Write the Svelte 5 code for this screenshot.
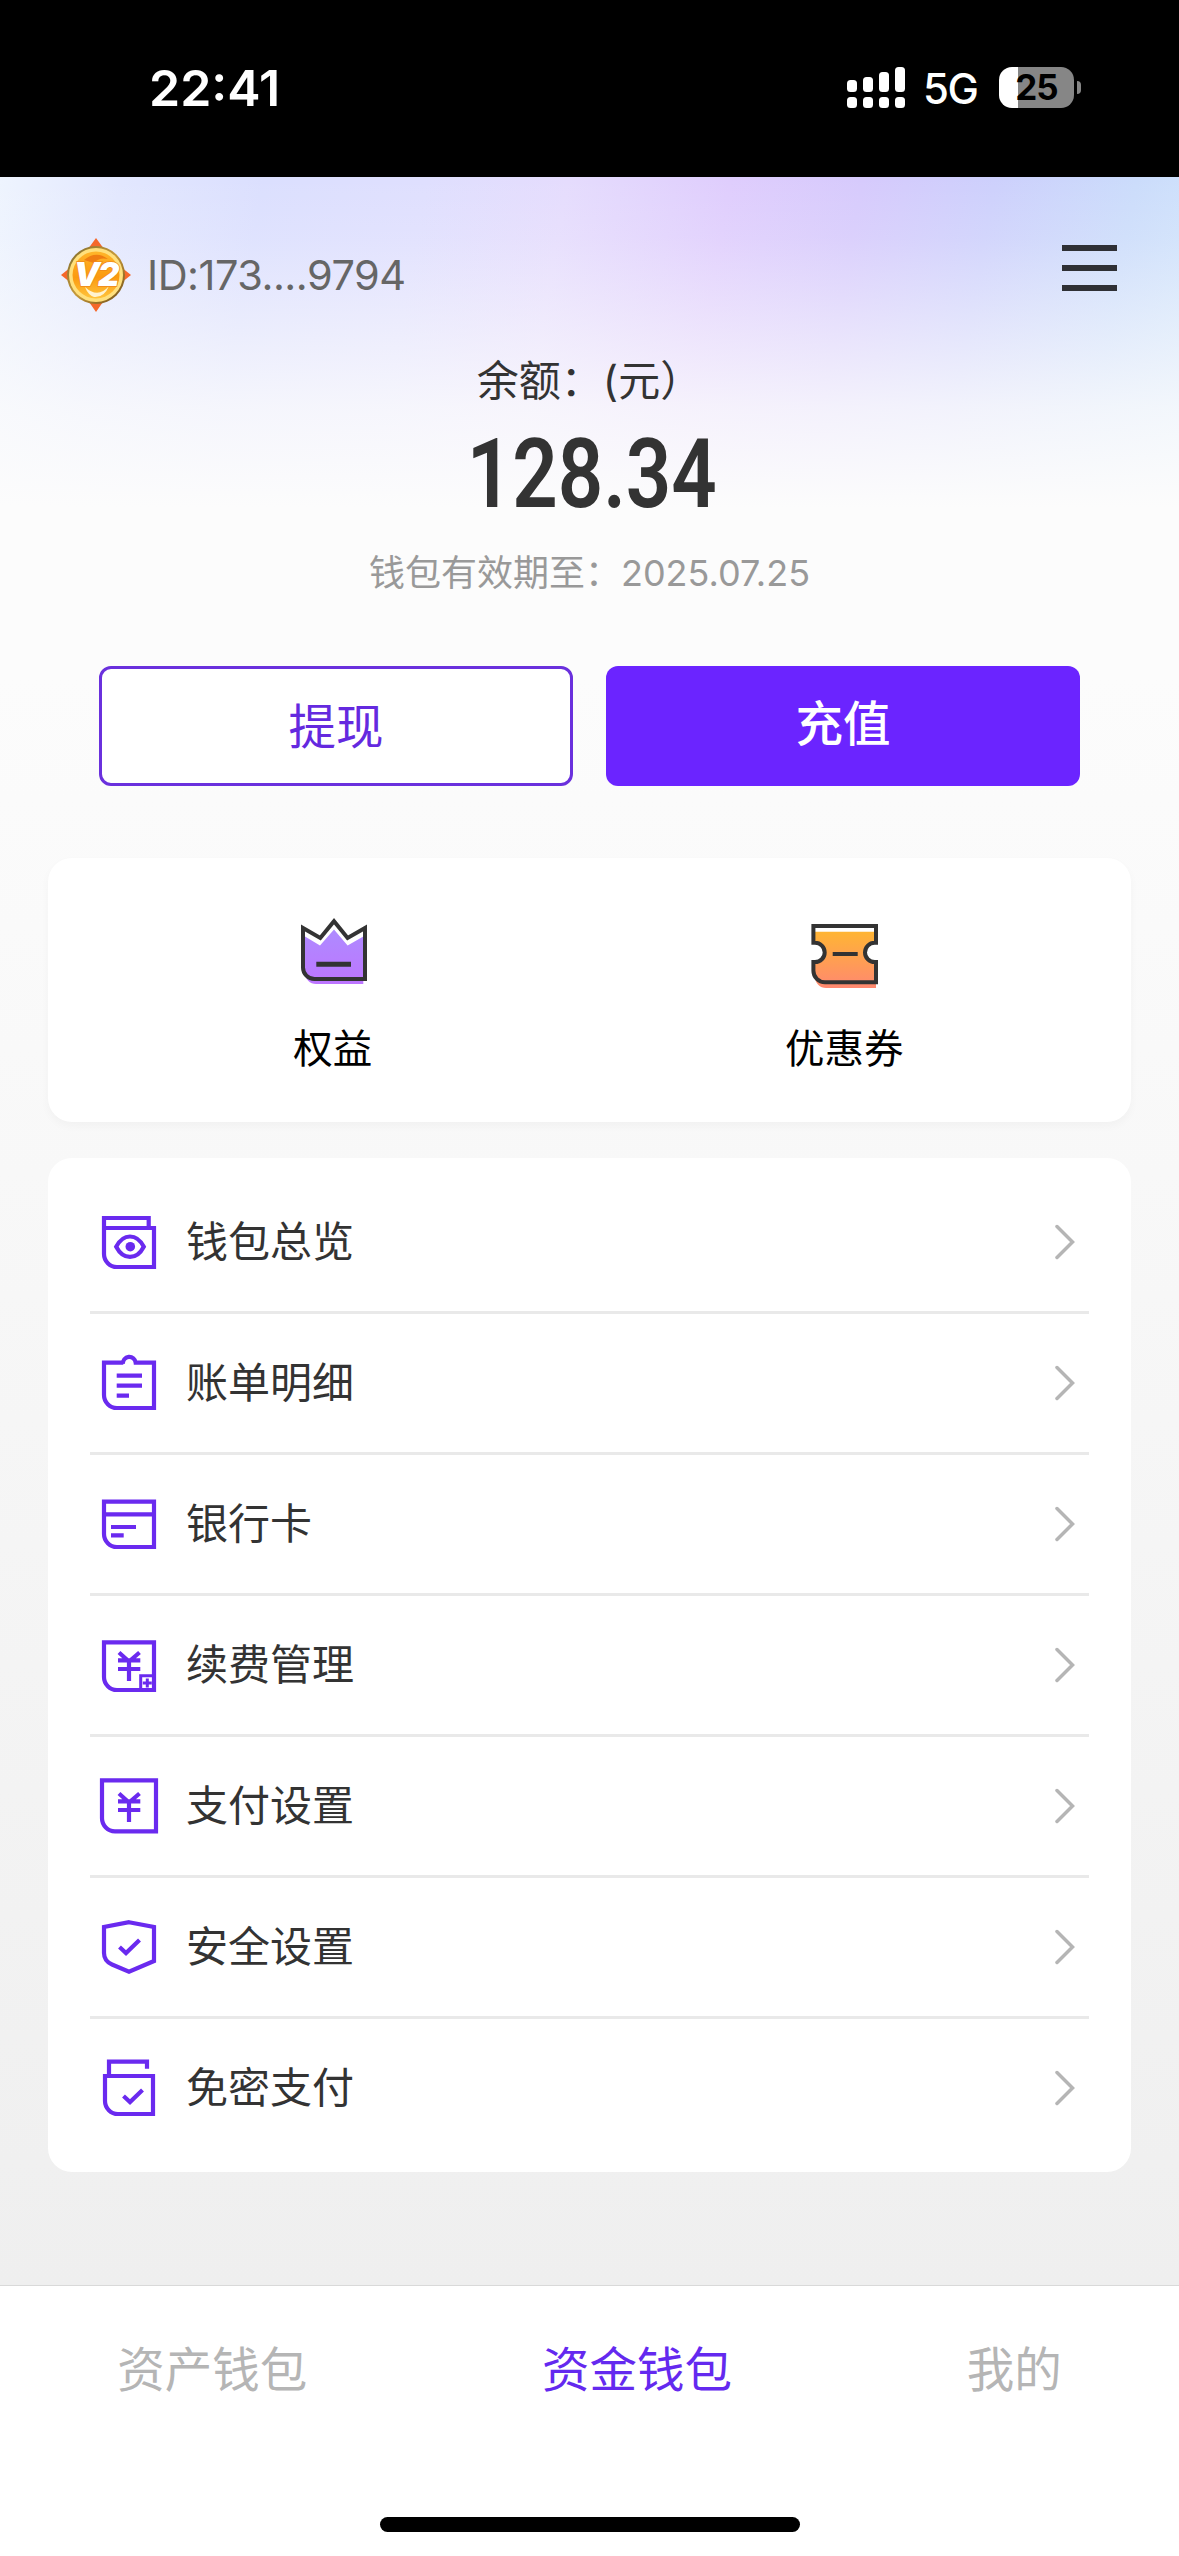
<script>
  const signalBars = [12, 15, 20, 25];

  const menu = [
    { id: 'overview', label: '钱包总览' },
    { id: 'bill', label: '账单明细' },
    { id: 'card', label: '银行卡' },
    { id: 'renew', label: '续费管理' },
    { id: 'pay', label: '支付设置' },
    { id: 'safe', label: '安全设置' },
    { id: 'nopwd', label: '免密支付' },
  ];

  const tabs = [
    { id: 'asset', label: '资产钱包' },
    { id: 'fund', label: '资金钱包' },
    { id: 'mine', label: '我的' },
  ];

  let activeTab = $state('fund');
</script>

{#snippet yen()}
  <path d="M20 17.5L30 26.5L40.5 17.5M19 25.3H41.3M19 34H41.3M30 25V46" />
{/snippet}

{#snippet menuIcon(id)}
  <svg class="menu-icon" viewBox="0 0 60 60" aria-hidden="true">
    {#if id === 'overview'}
      <path d="M5 16H55V55H18A13 13 0 0 1 5 42V6H49.7V16" />
      <path d="M17.2 34.7C20.5 28.5 25 24.5 31 24.5S41.5 28.5 44.8 34.7C41.5 41 37 44.9 31 44.9S20.5 41 17.2 34.7Z" />
      <circle class="solid" cx="31.3" cy="34.7" r="4.8" />
    {:else if id === 'bill'}
      <path d="M24.3 9.7H5V42A13 13 0 0 0 18 55H55V9.7H36.7A6.4 6.4 0 0 0 23.9 11" />
      <path d="M17.7 22.7H43M17.7 32.7H43M17.7 42.7H30" />
    {:else if id === 'card'}
      <path d="M5 7.7H55V53H18A13 13 0 0 1 5 40ZM5 20.3H55M12 33H37M12 41.3H24.7" />
    {:else if id === 'renew'}
      <path d="M5 7.3H55V55H18A13 13 0 0 1 5 42Z" />
      {@render yen()}
      <path class="thin" d="M41.7 57V40.7H57M43.8 48H52.8M48.3 43.5V52.5" />
    {:else if id === 'pay'}
      <path d="M3 4.3H57V55.3H16A13 13 0 0 1 3 42.3Z" />
      {@render yen()}
    {:else if id === 'safe'}
      <path d="M30 5.2L55 10V44L30 54.7L13 47.5Q5 44 5 36V10Z" />
      <path d="M20.5 30L27 36L40.5 23" />
    {:else}
      <path d="M6 18H54V56H19A13 13 0 0 1 6 43ZM10 18V3.7H48V10.7" />
      <path d="M24.5 38L31 44L43.5 32" />
    {/if}
  </svg>
{/snippet}

<div class="screen">
  <div class="status-bar">
    <span class="clock">22:41</span>
    <div class="status-right">
      <div class="signal">
        {#each signalBars as height}
          <div class="signal-col">
            <i style="height: {height}px"></i>
            <i class="dot"></i>
          </div>
        {/each}
      </div>
      <span class="network">5G</span>
      <div class="battery"><span>25</span></div>
      <i class="battery-tip"></i>
    </div>
  </div>

  <main>
    <header>
      <div class="user">
        <svg class="badge" viewBox="0 0 70 74" aria-hidden="true">
          <defs>
            <linearGradient id="gold" x1="0" y1="0" x2="0" y2="1">
              <stop offset="0" stop-color="#ffb52a" />
              <stop offset="0.55" stop-color="#fb9a10" />
              <stop offset="1" stop-color="#ffc43c" />
            </linearGradient>
            <linearGradient id="rim" x1="0" y1="0" x2="1" y2="1">
              <stop offset="0" stop-color="#7b6a2c" />
              <stop offset="0.5" stop-color="#c79a3a" />
              <stop offset="1" stop-color="#6b4a14" />
            </linearGradient>
          </defs>
          <path d="M35 0L43 11H27ZM35 74L26 61H44ZM0 37L10 29V45ZM70 37L60 29V45Z" fill="#f5682a" />
          <circle cx="35" cy="37" r="29" fill="url(#rim)" />
          <circle cx="35" cy="37" r="27" fill="#ffe07c" />
          <circle cx="35" cy="37" r="23.5" fill="url(#gold)" />
          <path d="M23 22Q35 12 47 21Q38 19 33 25Z" fill="#ef7d12" />
          <path d="M24 49Q37 61 48 48Q43 60 33 59Q27 57 24 49Z" fill="#fff3d0" />
          <text x="34.5" y="48" text-anchor="middle">V2</text>
        </svg>
        <span>ID:173....9794</span>
      </div>
      <button class="menu-button" aria-label="菜单">
        <i></i><i></i><i></i>
      </button>
    </header>

    <section class="balance">
      <p class="balance-title">余额：(元）</p>
      <p class="amount"><span>128.34</span></p>
      <p class="expiry">钱包有效期至：<span>2025.07.25</span></p>
    </section>

    <div class="actions">
      <button class="withdraw">提现</button>
      <button class="recharge">充值</button>
    </div>

    <section class="card perks">
      <div class="perk">
        <svg viewBox="0 0 72 72" aria-hidden="true">
          <defs>
            <linearGradient id="crown" x1="0" y1="0" x2="0" y2="1">
              <stop offset="0" stop-color="#ae8bff" />
              <stop offset="1" stop-color="#bd75ff" />
            </linearGradient>
          </defs>
          <path d="M7 22.5L22 31.5L36 15.5L49.6 31.5L65.3 22.5V70H18A11 11 0 0 1 7 59Z" fill="url(#crown)" />
          <path class="line" d="M5 14L22.3 24L36 7.2L49.6 24L67 14V65H16.5A11.5 11.5 0 0 1 5 53.5Z" />
          <path class="dash" d="M18.3 50.3H53" />
        </svg>
        <span>权益</span>
      </div>
      <div class="perk">
        <svg viewBox="0 0 72 72" aria-hidden="true">
          <defs>
            <linearGradient id="coupon" x1="0" y1="0" x2="0" y2="1">
              <stop offset="0" stop-color="#ffb534" />
              <stop offset="1" stop-color="#ff8870" />
            </linearGradient>
          </defs>
          <path d="M5 17.7H67V29A9.5 9.5 0 0 0 67 48V74H17A11 11 0 0 1 6 63V48A9.5 9.5 0 0 0 6 29Z" fill="url(#coupon)" />
          <path class="line" d="M4.4 12H67V28.7H65.7A9.7 9.7 0 0 0 65.7 48.1H67V68.3H16A11.6 11.6 0 0 1 4.4 56.7V48.1H6A9.7 9.7 0 0 0 6 28.7H4.4Z" />
          <path class="line" d="M23.7 40H48.7" />
        </svg>
        <span>优惠券</span>
      </div>
    </section>

    <ul class="card menu">
      {#each menu as item (item.id)}
        <li>
          {@render menuIcon(item.id)}
          <span>{item.label}</span>
          <svg class="arrow" viewBox="0 0 20 36" aria-hidden="true">
            <path d="M2 2.5L17.5 18L2 33.5" />
          </svg>
        </li>
      {/each}
    </ul>
  </main>

  <footer>
    <nav>
      {#each tabs as tab (tab.id)}
        <button class:active={tab.id === activeTab} onclick={() => (activeTab = tab.id)}>
          {tab.label}
        </button>
      {/each}
    </nav>
    <div class="home-indicator"></div>
  </footer>
</div>

<style>
  :global(body) {
    margin: 0;
  }

  .screen {
    display: flex;
    flex-direction: column;
    width: 1179px;
    height: 2556px;
    overflow: hidden;
    font-family: Inter, 'Noto Sans CJK SC', sans-serif;
    color: #333;
  }

  button {
    padding: 0;
    border: 0;
    background: none;
    font: inherit;
    color: inherit;
  }

  p,
  ul {
    margin: 0;
    padding: 0;
  }

  .status-bar {
    display: flex;
    justify-content: space-between;
    box-sizing: border-box;
    height: 177px;
    padding: 58px 98px 0 149px;
    background: #000;
    color: #fff;
  }

  .clock {
    height: 60px;
    font-size: 50px;
    font-weight: 600;
    line-height: 60px;
  }

  .status-right {
    display: flex;
    align-items: center;
    height: 59px;
  }

  .signal {
    display: flex;
    align-items: flex-end;
    gap: 6px;
    height: 41px;
  }

  .signal-col {
    display: flex;
    flex-direction: column;
    gap: 5px;
    width: 10px;
  }

  .signal-col i {
    border-radius: 3.5px;
    background: #fff;
  }

  .signal-col .dot {
    height: 11px;
  }

  .network {
    width: 76px;
    margin-left: 18px;
    padding-top: 3px;
    font-size: 42px;
    font-weight: 500;
    letter-spacing: -1.5px;
    line-height: 60px;
  }

  .battery {
    width: 75px;
    height: 41px;
    border-radius: 13px;
    background: linear-gradient(90deg, #fff 19px, #868686 19px);
    color: #000;
    font-size: 35px;
    font-weight: 700;
    line-height: 41px;
    text-align: center;
    letter-spacing: -1px;
  }

  .battery-tip {
    width: 4px;
    height: 13px;
    margin-left: 3px;
    border-radius: 0 4px 4px 0;
    background: #868686;
  }

  main {
    flex: 1;
    background:
      linear-gradient(180deg, rgba(252, 252, 252, 0) 0, rgba(252, 252, 252, 0.12) 60px, rgba(252, 252, 252, 0.45) 145px, rgba(252, 252, 252, 0.78) 230px, #fcfcfc 330px) 0 0 / 100% 330px no-repeat,
      linear-gradient(100deg, #eef4fe 0, #e2e7fe 120px, #dbdffe 260px, #dfdffe 420px, #e5dcfd 560px, #dfcdfd 720px, #d6cafc 850px, #cdd0fc 980px, #cbdcfb 1120px, #d2e6fc 1240px) 0 0 / 100% 330px no-repeat,
      linear-gradient(180deg, #fcfcfc 0, #fcfcfc 500px, #efefef 2108px);
  }

  header {
    display: flex;
    justify-content: space-between;
    padding: 60px 62px 0 61px;
  }

  .user {
    display: flex;
    align-items: center;
    gap: 16px;
    height: 76px;
    color: #666;
    font-size: 41.5px;
    font-weight: 400;
    letter-spacing: -0.5px;
  }

  .badge {
    width: 70px;
    height: 74px;
  }

  .badge text {
    fill: #fff;
    stroke: #f08a1c;
    stroke-width: 1.5px;
    paint-order: stroke;
    font-family: Inter, sans-serif;
    font-size: 33px;
    font-style: italic;
    font-weight: 900;
    letter-spacing: -2px;
  }

  .menu-button {
    display: flex;
    flex-direction: column;
    gap: 14px;
    width: 55px;
    height: 46px;
    margin-top: 8px;
  }

  .menu-button i {
    width: 100%;
    height: 6px;
    background: #2f3035;
  }

  .balance {
    display: flex;
    flex-direction: column;
    align-items: center;
  }

  .balance-title {
    height: 60px;
    margin-top: 38px;
    font-size: 42px;
    line-height: 60px;
  }

  .amount {
    height: 100px;
    margin-top: 13px;
    font-family: Roboto, sans-serif;
    font-size: 96px;
    font-weight: 600;
    line-height: 100px;
  }

  .amount span {
    display: inline-block;
    margin-left: 4px;
    transform: scaleX(0.83);
  }

  .expiry {
    height: 50px;
    margin-top: 24px;
    color: #999;
    font-size: 36px;
    line-height: 50px;
  }

  .actions {
    display: flex;
    justify-content: space-between;
    padding: 0 99px;
    margin-top: 68px;
  }

  .actions button {
    box-sizing: border-box;
    width: 474px;
    height: 120px;
    border-radius: 12px;
    font-size: 47.5px;
    font-weight: 500;
    line-height: 116px;
  }

  .actions .withdraw {
    border: 3px solid #6a30dd;
    background: #fff;
    color: #6429df;
    font-weight: 400;
  }

  .actions .recharge {
    padding-bottom: 4px;
    background: #6b24ff;
    color: #fff;
  }

  .card {
    margin: 0 48px;
    border-radius: 24px;
    background: #fff;
  }

  .perks {
    display: flex;
    box-sizing: border-box;
    height: 264px;
    margin-top: 72px;
    padding: 56px 30px 0;
    box-shadow: 0 4px 10px rgba(0, 0, 0, 0.03);
  }

  .perk {
    flex: 1;
    display: flex;
    flex-direction: column;
    align-items: center;
    gap: 35px;
    color: #000;
    font-size: 39.5px;
    line-height: 56px;
  }

  .perk span {
    margin-right: 2px;
  }

  .perk svg {
    width: 72px;
    height: 72px;
    overflow: visible;
  }

  .line,
  .dash {
    fill: none;
    stroke: #333;
    stroke-width: 4;
  }

  .dash {
    stroke-width: 5;
  }

  .menu {
    margin-top: 36px;
    padding: 15px 42px;
    list-style: none;
  }

  .menu li {
    display: flex;
    align-items: center;
    height: 138px;
    padding: 0 14px 0 9px;
    border-bottom: 3px solid #e9e9e9;
    font-size: 42px;
    line-height: 60px;
  }

  .menu li:last-child {
    border-bottom: 0;
  }

  .menu li span {
    flex: 1;
    margin-left: 27px;
    padding-bottom: 1px;
  }

  .menu-icon {
    width: 60px;
    height: 60px;
    fill: none;
    stroke: #6a2aef;
    stroke-width: 4.2;
  }

  .menu-icon .thin {
    stroke-width: 3;
  }

  .menu-icon .solid {
    fill: #6a2aef;
    stroke: none;
  }

  .arrow {
    width: 20px;
    height: 36px;
    fill: none;
    stroke: #b5b5b5;
    stroke-width: 3.5;
    stroke-linecap: round;
  }

  footer {
    display: flex;
    flex-direction: column;
    align-items: center;
    justify-content: space-between;
    box-sizing: border-box;
    height: 271px;
    padding-bottom: 24px;
    border-top: 1px solid #d9d9d9;
    background: #fff;
  }

  nav {
    display: flex;
    justify-content: space-around;
    width: 100%;
    padding-top: 49px;
    color: #b5b5b5;
    font-size: 47.5px;
    line-height: 70px;
  }

  nav .active {
    color: #6429ef;
  }

  .home-indicator {
    width: 420px;
    height: 15px;
    border-radius: 8px;
    background: #000;
  }
</style>
